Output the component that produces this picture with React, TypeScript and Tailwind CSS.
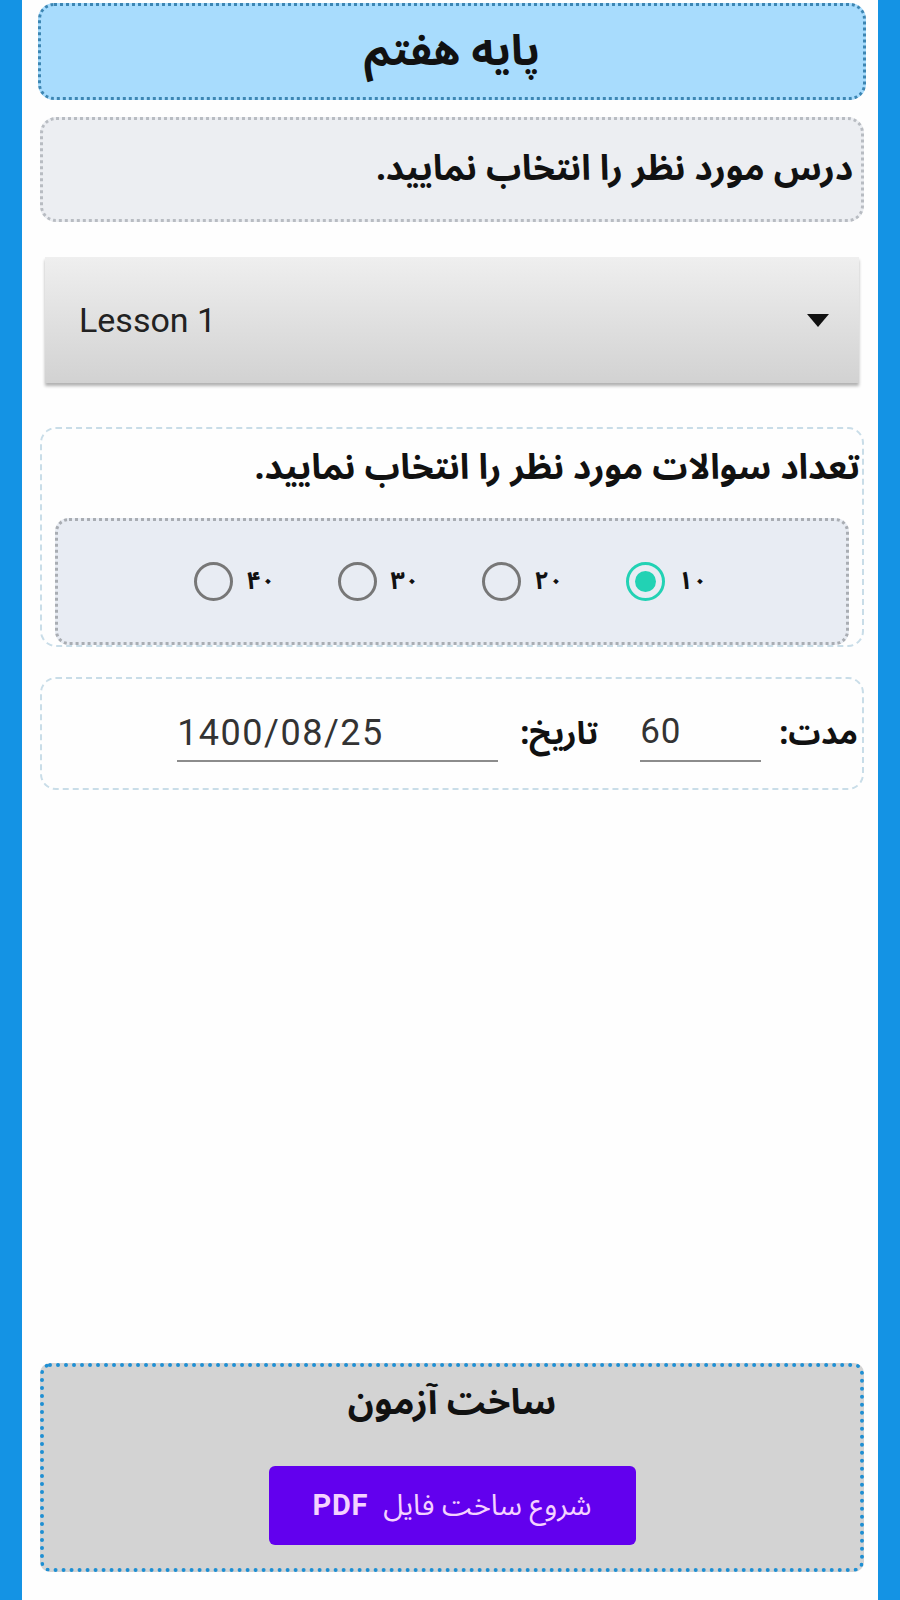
import React from "react";

const fa = { fontFamily: '"Noto Sans Arabic", "DejaVu Sans", sans-serif' } as React.CSSProperties;
const ro = { fontFamily: "Roboto, sans-serif" } as React.CSSProperties;

function Radio({ checked, label }: { checked?: boolean; label: string }) {
  return (
    <div className="flex items-center gap-[14px]">
      {checked ? (
        <div className="w-[39px] h-[39px] rounded-full border-[3px] border-[#22d2b4] flex items-center justify-center">
          <div className="w-[21px] h-[21px] rounded-full bg-[#22d2b4]" />
        </div>
      ) : (
        <div className="w-[39px] h-[39px] rounded-full border-[3px] border-[#777777]" />
      )}
      <span className="text-[25px] font-bold text-[#111] leading-none w-[36px]" style={fa}>
        {label}
      </span>
    </div>
  );
}

export default function App() {
  return (
    <div className="w-[900px] h-[1600px] bg-[#1493e4] px-[22px]">
      <div className="h-full bg-[#fefefe] flex flex-col pl-[16px] pr-[12px] pt-[3px] pb-[28px]">
        <div
          dir="rtl"
          className="h-[97px] rounded-[16px] border-[3px] border-dotted border-[#3d86b3] bg-[#a8dcfd] flex items-center justify-center"
        >
          <span className="text-[43px] font-bold text-[#111] leading-none" style={fa}>
            پایه هفتم
          </span>
        </div>

        <div
          dir="rtl"
          className="mt-[17px] mx-[2px] h-[105px] rounded-[16px] border-[3px] border-dotted border-[#b8bcc2] bg-[#eceef2] flex items-center pr-[8px]"
        >
          <span className="text-[35px] font-bold text-[#111] leading-none" style={fa}>
            درس مورد نظر را انتخاب نمایید.
          </span>
        </div>

        <div className="mt-[35px] mx-[7px] h-[126px] bg-gradient-to-b from-[#efefef] to-[#d2d2d2] shadow-[0_3px_3px_rgba(0,0,0,0.3)] flex items-center justify-between pl-[34px] pr-[30px]">
          <span className="text-[34px] text-[#222]" style={ro}>
            Lesson 1
          </span>
          <svg width="22" height="13" viewBox="0 0 22 13">
            <polygon points="0,0 22,0 11,13" fill="#111" />
          </svg>
        </div>

        <div
          dir="rtl"
          className="mt-[44px] mx-[2px] h-[220px] rounded-[16px] border-2 border-dashed border-[#c9dde8] flex flex-col"
        >
          <div className="pr-[2px] pt-[22px] h-[90px]">
            <span className="text-[35px] font-bold text-[#111] leading-none" style={fa}>
              تعداد سوالات مورد نظر را انتخاب نمایید.
            </span>
          </div>
          <div
            dir="ltr"
            className="mx-[13px] h-[128px] rounded-[14px] border-[3px] border-dotted border-[#a9adb3] bg-[#e8ecf3] flex items-center justify-center gap-[55px] pl-[4px]"
          >
            <Radio label="۴۰" />
            <Radio label="۳۰" />
            <Radio label="۲۰" />
            <Radio checked label="۱۰" />
          </div>
        </div>

        <div
          dir="rtl"
          className="mt-[30px] mx-[2px] h-[113px] rounded-[16px] border-2 border-dashed border-[#c9dde8] flex items-center pr-[4px]"
        >
          <span className="text-[32px] font-bold text-[#111] leading-none" style={fa}>
            مدت:
          </span>
          <div className="mr-[18px] w-[121px] h-[56px] border-b-2 border-[#8c8c8c] flex items-center" dir="ltr">
            <span className="text-[35px] text-[#333] tracking-[1px]" style={ro}>
              60
            </span>
          </div>
          <span className="mr-[42px] text-[32px] font-bold text-[#111] leading-none" style={fa}>
            تاریخ:
          </span>
          <div className="mr-[22px] w-[321px] h-[56px] border-b-2 border-[#8c8c8c] flex items-center" dir="ltr">
            <span className="text-[36px] text-[#333] tracking-[1.5px]" style={ro}>
              1400/08/25
            </span>
          </div>
        </div>

        <div
          dir="rtl"
          className="mt-auto mx-[2px] h-[209px] rounded-[10px] border-[4px] border-dotted border-[#1e8fd3] bg-[#d3d3d3] flex flex-col items-center"
        >
          <span className="mt-[18px] text-[36px] font-bold text-[#111] leading-none" style={fa}>
            ساخت آزمون
          </span>
          <button className="mt-[45px] w-[367px] h-[79px] rounded-[6px] bg-[#6200ee] flex items-center justify-center">
            <span className="text-[29px] text-[#f4d2ff] tracking-wide" style={fa}>
              شروع ساخت فایل&nbsp; <span className="font-bold" style={ro}>PDF</span>
            </span>
          </button>
        </div>
      </div>
    </div>
  );
}
